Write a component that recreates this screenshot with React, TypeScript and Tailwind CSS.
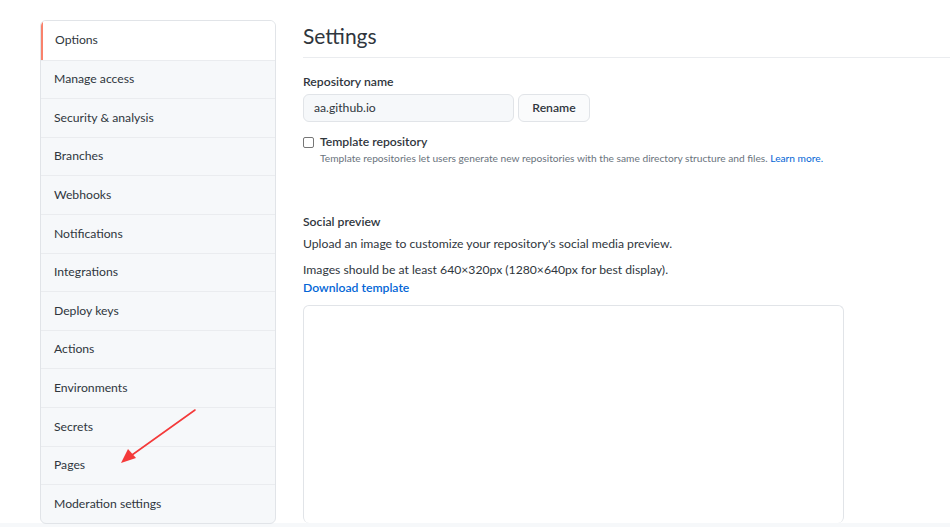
const items = [
  "Options",
  "Manage access",
  "Security & analysis",
  "Branches",
  "Webhooks",
  "Notifications",
  "Integrations",
  "Deploy keys",
  "Actions",
  "Environments",
  "Secrets",
  "Pages",
  "Moderation settings",
];

function Sidebar() {
  return (
    <nav className="w-[236px] shrink-0 rounded-md border border-[#e1e4e8] overflow-hidden bg-[#f6f8fa]">
      {items.map((label, i) => (
        <div
          key={label}
          className={
            i === 0
              ? "h-[38.6px] flex items-center pl-[12px] border-l-2 border-[#f9826c] bg-white text-[#2f363d]"
              : "h-[38.6px] flex items-center pl-[13px] border-t border-[#eaecef] text-[#2f363d]"
          }
        >
          {label}
        </div>
      ))}
    </nav>
  );
}

export default function App() {
  return (
    <div className="w-[950px] h-[527px] overflow-hidden bg-[#f6f8fa] text-[12.2px] text-[#2f363d] [font-family:Lato,'Noto_Sans',sans-serif] relative">
      <div className="h-[523px] bg-white flex pl-[40px] pt-[20px] gap-[27px]">
        <div className="h-[502px]">
          <Sidebar />
        </div>

        <main className="flex-1 flex flex-col">
          <h2 className="text-[21px] leading-[32px] pb-[5px] border-b border-[#eaecef]">Settings</h2>

          <label className="mt-[15px] font-semibold leading-[18px]">Repository name</label>
          <div className="mt-[3px] flex gap-[4px]">
            <div className="w-[211px] h-[28px] rounded-md border border-[#e1e4e8] bg-[#f6f8fa] flex items-center px-[10px]">
              aa.github.io
            </div>
            <button className="w-[72px] h-[28px] rounded-md border border-[#e1e4e8] bg-[#fafbfc] font-semibold">
              Rename
            </button>
          </div>

          <div className="mt-[11px] flex items-center gap-[6px]">
            <span className="w-[11px] h-[11px] rounded-[2px] border border-[#767676] bg-white" />
            <span className="font-semibold leading-[18px]">Template repository</span>
          </div>
          <p className="pl-[17px] text-[10.2px] leading-[14px] text-[#6a737d]">
            Template repositories let users generate new repositories with the same directory structure and files.{" "}
            <span className="text-[#0366d6]">Learn more.</span>
          </p>

          <h3 className="mt-[48px] font-semibold leading-[18px]">Social preview</h3>
          <p className="mt-[4px] leading-[18px]">Upload an image to customize your repository's social media preview.</p>
          <p className="mt-[8px] leading-[18px]">Images should be at least 640×320px (1280×640px for best display).</p>
          <a className="font-semibold text-[#0366d6] leading-[18px]">Download template</a>
          <div className="mt-[8px] w-[541px] flex-1 rounded-md border border-[#e1e4e8] border-b-0" />
        </main>
      </div>

      <svg className="absolute left-0 top-0 pointer-events-none" width="950" height="527">
        <line x1="195" y1="410" x2="132" y2="455" stroke="#f43a3a" strokeWidth="1.6" strokeLinecap="round" />
        <polygon points="121,463 128,449 136,458" fill="#f43a3a" />
      </svg>
    </div>
  );
}
